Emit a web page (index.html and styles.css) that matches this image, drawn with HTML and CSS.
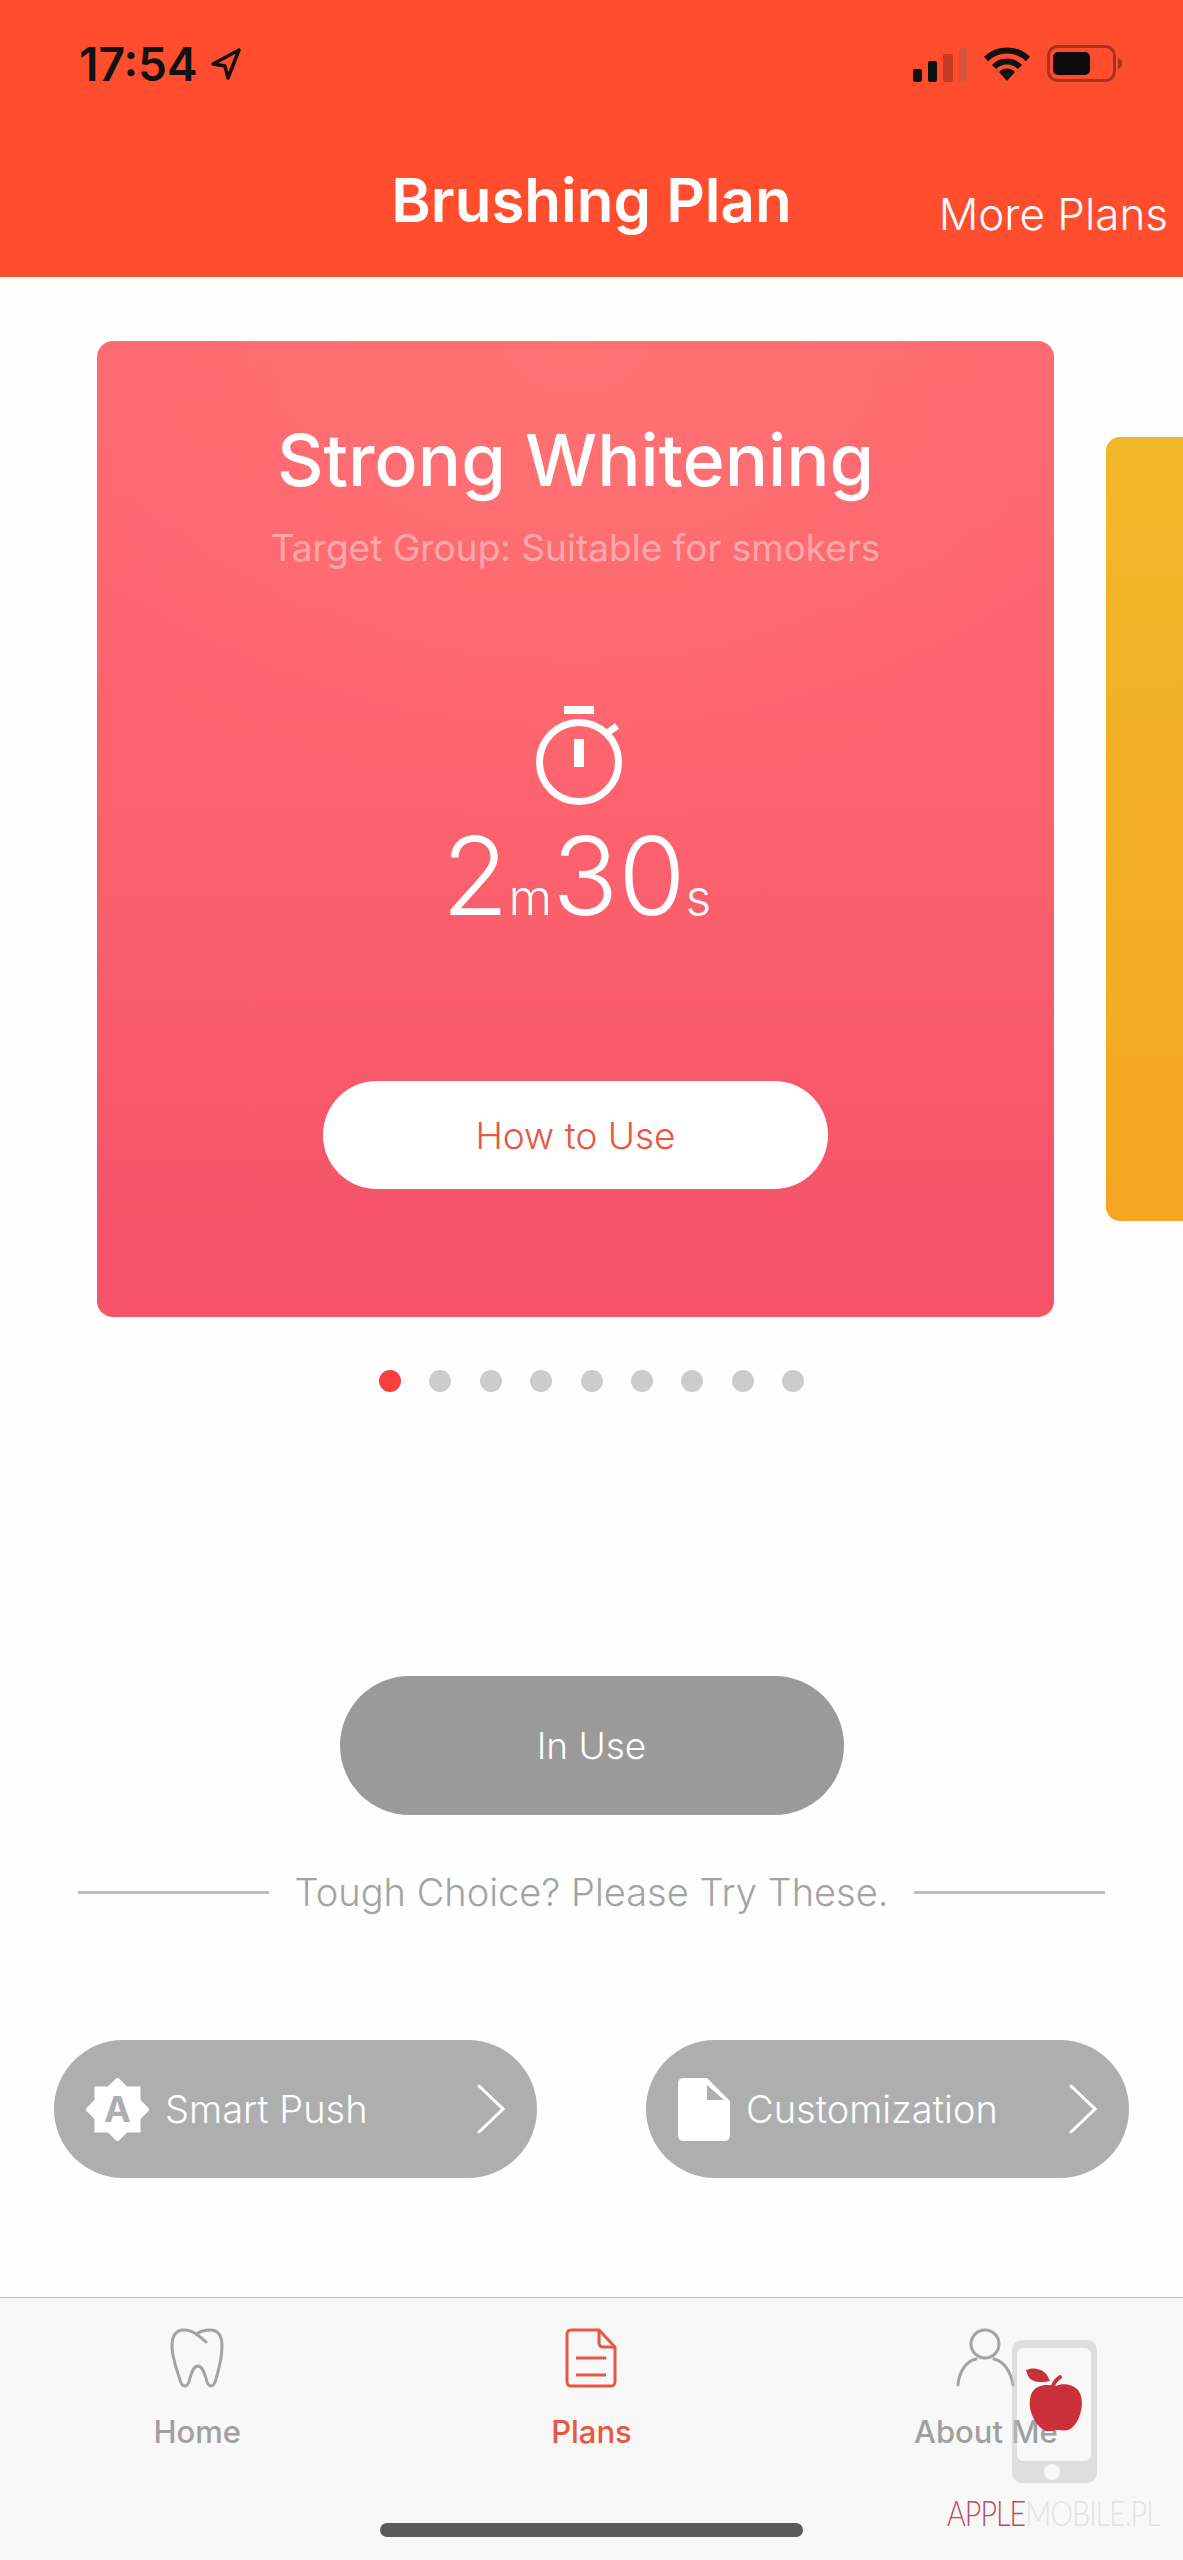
FILE: index.html
```html
<!DOCTYPE html>
<html lang="en">
<head>
    <meta charset="UTF-8">
    <title>Brushing Plan</title>
    <link rel="stylesheet" href="styles.css">
</head>
<body>
<div class="screen">
    <header class="top">
        <div class="status">
            <div class="status-left">
                <span class="clock">17:54</span>
                <svg class="arrow" width="33" height="34" viewBox="0 0 33 34"><path d="M30 3 L4 17 L16 19 L19 31 Z" fill="none" stroke="#111" stroke-width="3.5" stroke-linejoin="round"/></svg>
            </div>
            <div class="status-right">
                <svg width="54" height="34" viewBox="0 0 54 34">
                    <rect x="0" y="21" width="9" height="13" rx="2" fill="#111"/>
                    <rect x="15" y="13" width="9" height="21" rx="2" fill="#111"/>
                    <rect x="30" y="6" width="10" height="28" rx="2" fill="#c43a22"/>
                    <rect x="46" y="0" width="8" height="34" rx="2" fill="#d9553a"/>
                </svg>
                <svg width="50" height="36" viewBox="0 0 50 36">
                    <path d="M4 13 A30 30 0 0 1 46 13" fill="none" stroke="#111" stroke-width="6"/>
                    <path d="M12 21 A18 18 0 0 1 38 21" fill="none" stroke="#111" stroke-width="6"/>
                    <path d="M25 35 L17 26 A11 11 0 0 1 33 26 Z" fill="#111"/>
                </svg>
                <svg width="75" height="37" viewBox="0 0 75 37">
                    <rect x="1.5" y="1.5" width="66" height="34" rx="9" fill="none" stroke="#a5331f" stroke-width="3"/>
                    <rect x="6" y="7" width="37" height="23" rx="5" fill="#0c0c0c"/>
                    <path d="M71 13 C74 14 75 16 75 18.500 C75 21 74 23 71 24 Z" fill="#a5331f"/>
                </svg>
            </div>
        </div>
        <div class="nav">
            <h1 class="nav-title">Brushing Plan</h1>
            <a class="nav-more">More Plans</a>
        </div>
    </header>

    <section class="carousel">
        <div class="plan-card">
            <h2 class="plan-name">Strong Whitening</h2>
            <p class="plan-target">Target Group: Suitable for smokers</p>
            <svg class="timer-icon" width="90" height="104" viewBox="0 0 90 104">
                <rect x="30" y="0" width="30" height="8" fill="#fff"/>
                <circle cx="45" cy="56" r="39.500" fill="none" stroke="#fff" stroke-width="7"/>
                <path d="M73 27 L83 20" stroke="#fff" stroke-width="7"/>
                <rect x="40" y="33" width="10" height="28" fill="#fff"/>
            </svg>
            <div class="duration"><span class="num">2</span><span class="unit">m</span><span class="num">30</span><span class="unit">s</span></div>
            <button class="howto">How to Use</button>
        </div>
        <div class="plan-next"></div>
    </section>

    <div class="dots">
        <i class="dot on"></i><i class="dot"></i><i class="dot"></i><i class="dot"></i><i class="dot"></i><i class="dot"></i><i class="dot"></i><i class="dot"></i><i class="dot"></i>
    </div>

    <button class="in-use">In Use</button>

    <div class="divider">
        <span class="rule"></span>
        <span class="divider-text">Tough Choice? Please Try These.</span>
        <span class="rule"></span>
    </div>

    <div class="pills">
        <a class="pill">
            <svg class="pill-icon" width="63" height="63" viewBox="0 0 63 63">
                <rect x="8.500" y="8.500" width="46" height="46" fill="#fff"/>
                <rect x="8.500" y="8.500" width="46" height="46" fill="#fff" transform="rotate(45 31.500 31.500)"/>
                <text class="badge-letter" x="31.500" y="44" text-anchor="middle">A</text>
            </svg>
            <span class="pill-label">Smart Push</span>
            <svg class="chevron" width="28" height="50" viewBox="0 0 28 50"><path d="M2 2 L26 25 L2 48" fill="none" stroke="#fff" stroke-width="3" stroke-linecap="round"/></svg>
        </a>
        <a class="pill">
            <svg class="pill-icon" width="52" height="63" viewBox="0 0 52 63">
                <path d="M5 0 H29 L52 23 V58 A5 5 0 0 1 47 63 H5 A5 5 0 0 1 0 58 V5 A5 5 0 0 1 5 0 Z" fill="#fff"/>
                <path d="M29 7 L46 22 H29 Z" fill="#aeaeae"/>
            </svg>
            <span class="pill-label">Customization</span>
            <svg class="chevron" width="28" height="50" viewBox="0 0 28 50"><path d="M2 2 L26 25 L2 48" fill="none" stroke="#fff" stroke-width="3" stroke-linecap="round"/></svg>
        </a>
    </div>

    <nav class="tabbar">
        <div class="tabs">
            <a class="tab">
                <svg width="54" height="60" viewBox="0 0 54 60"><path d="M36 14 C32 10 29 8 26 6 C22 3 18 2 14 2 C6 2 2 8 2 18 C2 30 7 42 10 52 C11 56 13 58 15 58 C18 58 19 55 20 50 C22 43 24 38 28 38 C32 38 34 44 36 50 C37 55 38 58 41 58 C43 58 45 55 46 51 C49 41 52 30 52 18 C52 8 48 2 40 2 C35 2 31 3 26 6" fill="none" stroke="#a3a3a3" stroke-width="3" stroke-linecap="round"/></svg>
                <span class="tab-label">Home</span>
            </a>
            <a class="tab tab-on">
                <svg width="52" height="60" viewBox="0 0 52 60">
                    <path d="M6 2 H34 L50 19 V54 A4 4 0 0 1 46 58 H6 A4 4 0 0 1 2 54 V6 A4 4 0 0 1 6 2 Z" fill="none" stroke="#e8573f" stroke-width="3"/>
                    <path d="M34 2 V15 A4 4 0 0 0 38 19 H50 M11 30 H41 M11 47 H41" fill="none" stroke="#e8573f" stroke-width="3"/>
                </svg>
                <span class="tab-label">Plans</span>
            </a>
            <a class="tab">
                <svg width="60" height="60" viewBox="0 0 60 60">
                    <circle cx="29" cy="16" r="14" fill="none" stroke="#a3a3a3" stroke-width="3"/>
                    <path d="M2 57 C3 44 10 33 20 31 M38 31 C48 33 55 44 57 57" fill="none" stroke="#a3a3a3" stroke-width="3" stroke-linecap="round"/>
                </svg>
                <span class="tab-label">About Me</span>
            </a>
        </div>
        <div class="home-bar"></div>
    </nav>

    <div class="watermark">
        <svg class="wm-phone" width="85" height="143" viewBox="0 0 85 143">
            <path fill-rule="evenodd" d="M10 0 H75 A10 10 0 0 1 85 10 V133 A10 10 0 0 1 75 143 H10 A10 10 0 0 1 0 133 V10 A10 10 0 0 1 10 0 Z M11 8 A6 6 0 0 0 5 14 V115 A6 6 0 0 0 11 121 H73 A6 6 0 0 0 79 115 V14 A6 6 0 0 0 73 8 Z M40 124 A8 8 0 1 0 40 140 A8 8 0 1 0 40 124 Z" fill="#c4c4c4" fill-opacity="0.5"/>
            <path d="M44 46 C50 43 60 44 65 49 C70 54 71 63 69 71 C67 80 62 88 56 90 C52 91 49 90 46 90 C42 90 38 92 34 91 C26 88 20 78 18 68 C17 58 19 50 26 47 C32 44 38 45 44 46 Z" fill="#c9303a"/>
            <path d="M14 30 C20 27 30 28 35 35 L38 41 C30 43 20 43 16 36 Z" fill="#c9303a"/>
            <path d="M41 46 C42 42 44 40 48 37" fill="none" stroke="#c9303a" stroke-width="4" stroke-linecap="round"/>
        </svg>
        <div class="wm-text"><span class="wm-red">APPLE</span>MOBILE.PL</div>
    </div>
</div>
</body>
</html>
```

FILE: styles.css
```css
html, body {
    margin: 0;
    padding: 0;
}
body {
    font-family: Inter, "Liberation Sans", Arial, sans-serif;
    background-color: #fff;
}
button {
    font-family: inherit;
    border: none;
    padding: 0;
}
.screen {
    position: relative;
    width: 1183px;
    height: 2560px;
    overflow: hidden;
    display: flex;
    flex-direction: column;
    background-color: #fefefe;
}

/* header */
.top {
    height: 277px;
    background-color: #ff4d2e;
    color: #fff;
    flex: none;
}
.status {
    display: flex;
    justify-content: space-between;
    align-items: flex-start;
    padding: 45px 61px 0 79px;
    height: 40px;
}
.status-left {
    display: flex;
    align-items: center;
    gap: 11px;
    height: 38px;
}
.clock {
    font-size: 46px;
    font-weight: 600;
    color: #111;
}
.status-right {
    display: flex;
    gap: 15px;
    align-items: flex-end;
}
.nav {
    position: relative;
    margin-top: 78px;
    text-align: center;
}
.nav-title {
    margin: 0;
    font-size: 60px;
    font-weight: 600;
    line-height: 74px;
}
.nav-more {
    position: absolute;
    right: 15px;
    top: 24px;
    font-size: 44px;
    line-height: 54px;
    font-weight: 300;
}

/* carousel */
.carousel {
    display: flex;
    align-items: center;
    gap: 52px;
    padding: 64px 0 0 97px;
    flex: none;
}
.plan-card {
    flex: none;
    width: 957px;
    height: 976px;
    box-sizing: border-box;
    padding-top: 77px;
    border-radius: 16px;
    color: #fff;
    text-align: center;
    display: flex;
    flex-direction: column;
    align-items: center;
    background: radial-gradient(ellipse 620px 480px at 50% 0, #ff7272 0%, rgba(255, 112, 113, 0) 100%), linear-gradient(180deg, #fd6872 0%, #fc626e 50%, #f55468 90%);
}
.plan-name {
    margin: 0;
    font-size: 72px;
    font-weight: 500;
    line-height: 84px;
}
.plan-target {
    margin: 24px 0 0;
    font-size: 37px;
    line-height: 44px;
    font-weight: 400;
    color: rgba(255, 255, 255, 0.42);
}
.timer-icon {
    margin-top: 136px;
    margin-left: 7px;
}
.duration {
    display: flex;
    align-items: baseline;
    margin-top: 0;
    margin-left: 2px;
    line-height: 130px;
    height: 130px;
}
.num {
    font-size: 109px;
    font-weight: 300;
}
.unit {
    font-size: 50px;
    font-weight: 300;
}
.howto {
    width: 505px;
    height: 108px;
    margin-top: 141px;
    border-radius: 54px;
    background-color: #fff;
    color: #e8573f;
    font-size: 37px;
    font-weight: 300;
}
.plan-next {
    flex: none;
    width: 120px;
    height: 784px;
    border-radius: 14px;
    background: linear-gradient(180deg, #f0b829 0%, #f5a623 100%);
}

/* dots */
.dots {
    display: flex;
    gap: 28.4px;
    margin: 53px 0 0 379px;
}
.dot {
    width: 22px;
    height: 22px;
    border-radius: 50%;
    background-color: #cccccc;
}
.dot.on {
    background-color: #f4403f;
}

/* in use */
.in-use {
    align-self: center;
    flex: none;
    width: 504px;
    height: 139px;
    margin-top: 284px;
    border-radius: 70px;
    background-color: #9a9a9a;
    color: #fff;
    font-size: 37px;
    font-weight: 300;
}
.divider {
    display: flex;
    align-items: center;
    gap: 26px;
    height: 44px;
    margin-top: 55px;
    padding: 0 78px;
}
.rule {
    flex: 1;
    height: 3px;
    background-color: #bdbdbd;
}
.divider-text {
    font-size: 38px;
    font-weight: 300;
    color: #a3a3a3;
    white-space: nowrap;
}

/* pills */
.pills {
    display: flex;
    justify-content: space-between;
    margin-top: 126px;
    padding: 0 54px;
}
.pill {
    width: 483px;
    height: 138px;
    box-sizing: border-box;
    padding: 0 32px;
    border-radius: 69px;
    background-color: #aeaeae;
    color: #fff;
    display: flex;
    align-items: center;
}
.pill-icon {
    flex: none;
}
.pill-label {
    flex: 1;
    margin-left: 16px;
    font-size: 38px;
    font-weight: 300;
    white-space: nowrap;
}
.badge-letter {
    font-size: 36px;
    font-weight: 700;
    fill: #aeaeae;
}

/* tab bar */
.tabbar {
    margin-top: 119px;
    flex: 1;
    border-top: 1px solid #bcbcbc;
    background-color: #f8f8f8;
}
.tabs {
    display: grid;
    grid-template-columns: repeat(3, 1fr);
    padding-top: 30px;
}
.tab {
    display: flex;
    flex-direction: column;
    align-items: center;
    color: #a0a0a0;
}
.tab-on {
    color: #e8573f;
}
.tab-label {
    margin-top: 24px;
    font-size: 31px;
    line-height: 40px;
    font-weight: 500;
}
.home-bar {
    width: 423px;
    height: 14px;
    margin: 71px auto 0;
    border-radius: 7px;
    background-color: #5a5a5a;
}

/* watermark sits over the tab bar */
.watermark {
    position: absolute;
    left: 947px;
    top: 2340px;
    width: 220px;
}
.wm-phone {
    display: block;
    margin-left: 65px;
}
.wm-text {
    margin-top: 9px;
    font-family: Lato, "Liberation Sans", sans-serif;
    font-size: 35px;
    line-height: 40px;
    font-weight: 300;
    letter-spacing: -1.2px;
    white-space: nowrap;
    color: #e2e2e2;
    transform: scaleX(0.82);
    transform-origin: left center;
}
.wm-red {
    color: #c2485a;
}
```
